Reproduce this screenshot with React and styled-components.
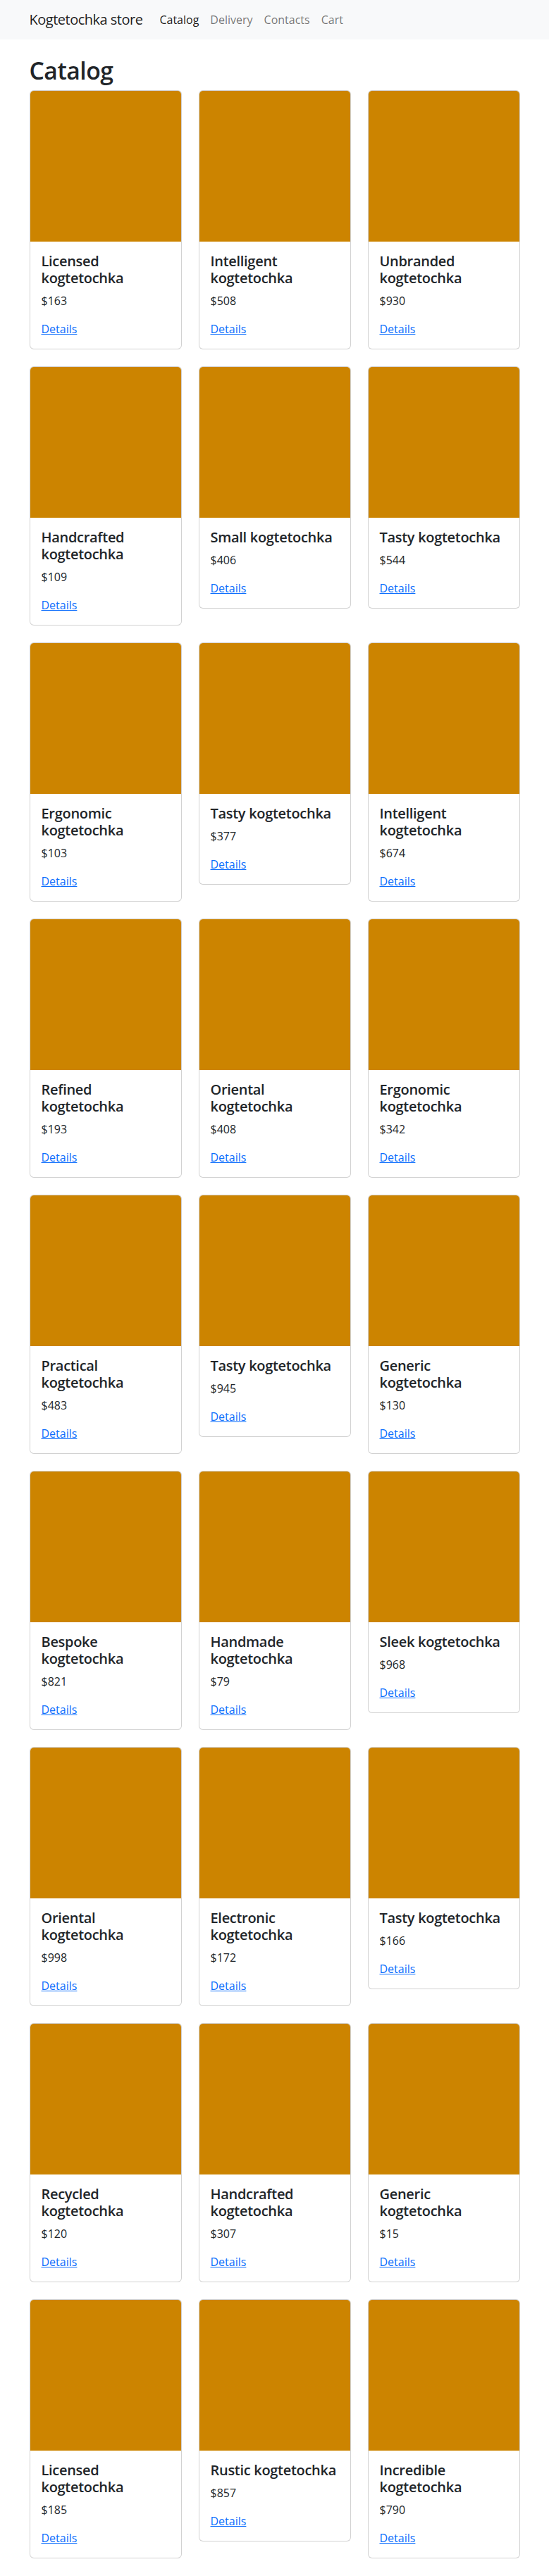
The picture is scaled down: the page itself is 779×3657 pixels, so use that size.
import React from 'react';
import styled, { createGlobalStyle } from 'styled-components';

const products = [
  ['Licensed', 163], ['Intelligent', 508], ['Unbranded', 930],
  ['Handcrafted', 109], ['Small', 406], ['Tasty', 544],
  ['Ergonomic', 103], ['Tasty', 377], ['Intelligent', 674],
  ['Refined', 193], ['Oriental', 408], ['Ergonomic', 342],
  ['Practical', 483], ['Tasty', 945], ['Generic', 130],
  ['Bespoke', 821], ['Handmade', 79], ['Sleek', 968],
  ['Oriental', 998], ['Electronic', 172], ['Tasty', 166],
  ['Recycled', 120], ['Handcrafted', 307], ['Generic', 15],
  ['Licensed', 185], ['Rustic', 857], ['Incredible', 790],
];

const GlobalStyle = createGlobalStyle`
  * { box-sizing: border-box; }
  body {
    margin: 0;
    font-family: "Open Sans", "Noto Sans", sans-serif;
    font-size: 16px;
    line-height: 1.5;
    color: #212529;
    background: #fff;
  }
`;

const Navbar = styled.nav`
  background-color: #f8f9fa;
  padding: 8px 0;
`;

const NavContainer = styled.div`
  width: 720px;
  margin: 0 auto;
  padding: 0 12px;
  display: flex;
  align-items: center;
`;

const Brand = styled.a`
  font-size: 20px;
  line-height: 30px;
  padding: 5px 0;
  margin-right: 16px;
  letter-spacing: -0.5px;
  color: rgba(0, 0, 0, 0.9);
  text-decoration: none;
`;

const NavList = styled.div`
  display: flex;
`;

const NavLink = styled.a`
  padding: 8px;
  line-height: 24px;
  color: ${(p) => (p.active ? 'rgba(0, 0, 0, 0.9)' : 'rgba(0, 0, 0, 0.55)')};
  text-decoration: none;
`;

const Main = styled.main`
  width: 720px;
  margin: 0 auto;
  padding: 24px 12px 0;
`;

const Title = styled.h1`
  margin: 0 0 8px;
  font-size: 33.7px;
  font-weight: 600;
  letter-spacing: -0.5px;
  line-height: 1.2;
`;

const Grid = styled.div`
  display: grid;
  grid-template-columns: repeat(3, 216px);
  column-gap: 24px;
  row-gap: 24px;
  align-items: start;
  padding-bottom: 24px;
`;

const Card = styled.div`
  border: 1px solid rgba(0, 0, 0, 0.175);
  border-radius: 6px;
  background: #fff;
  overflow: hidden;
`;

const Picture = styled.div`
  height: 214px;
  background-color: #cc8400;
`;

const Body = styled.div`
  padding: 16px;
`;

const Name = styled.h5`
  margin: 0 0 8px;
  font-size: 20px;
  font-weight: 600;
  letter-spacing: -0.3px;
  line-height: 1.2;
`;

const Price = styled.p`
  margin: 0 0 16px;
`;

const Details = styled.a`
  color: #0d6efd;
  text-decoration: underline;
`;

const App = () => {
  return (
    <>
      <GlobalStyle />
      <Navbar>
        <NavContainer>
          <Brand href="#">Kogtetochka store</Brand>
          <NavList>
            <NavLink href="#" active>Catalog</NavLink>
            <NavLink href="#">Delivery</NavLink>
            <NavLink href="#">Contacts</NavLink>
            <NavLink href="#">Cart</NavLink>
          </NavList>
        </NavContainer>
      </Navbar>
      <Main>
        <Title>Catalog</Title>
        <Grid>
          {products.map(([name, price], i) => (
            <Card key={i}>
              <Picture />
              <Body>
                <Name>{name} kogtetochka</Name>
                <Price>${price}</Price>
                <Details href="#">Details</Details>
              </Body>
            </Card>
          ))}
        </Grid>
      </Main>
    </>
  );
};

export default App;
